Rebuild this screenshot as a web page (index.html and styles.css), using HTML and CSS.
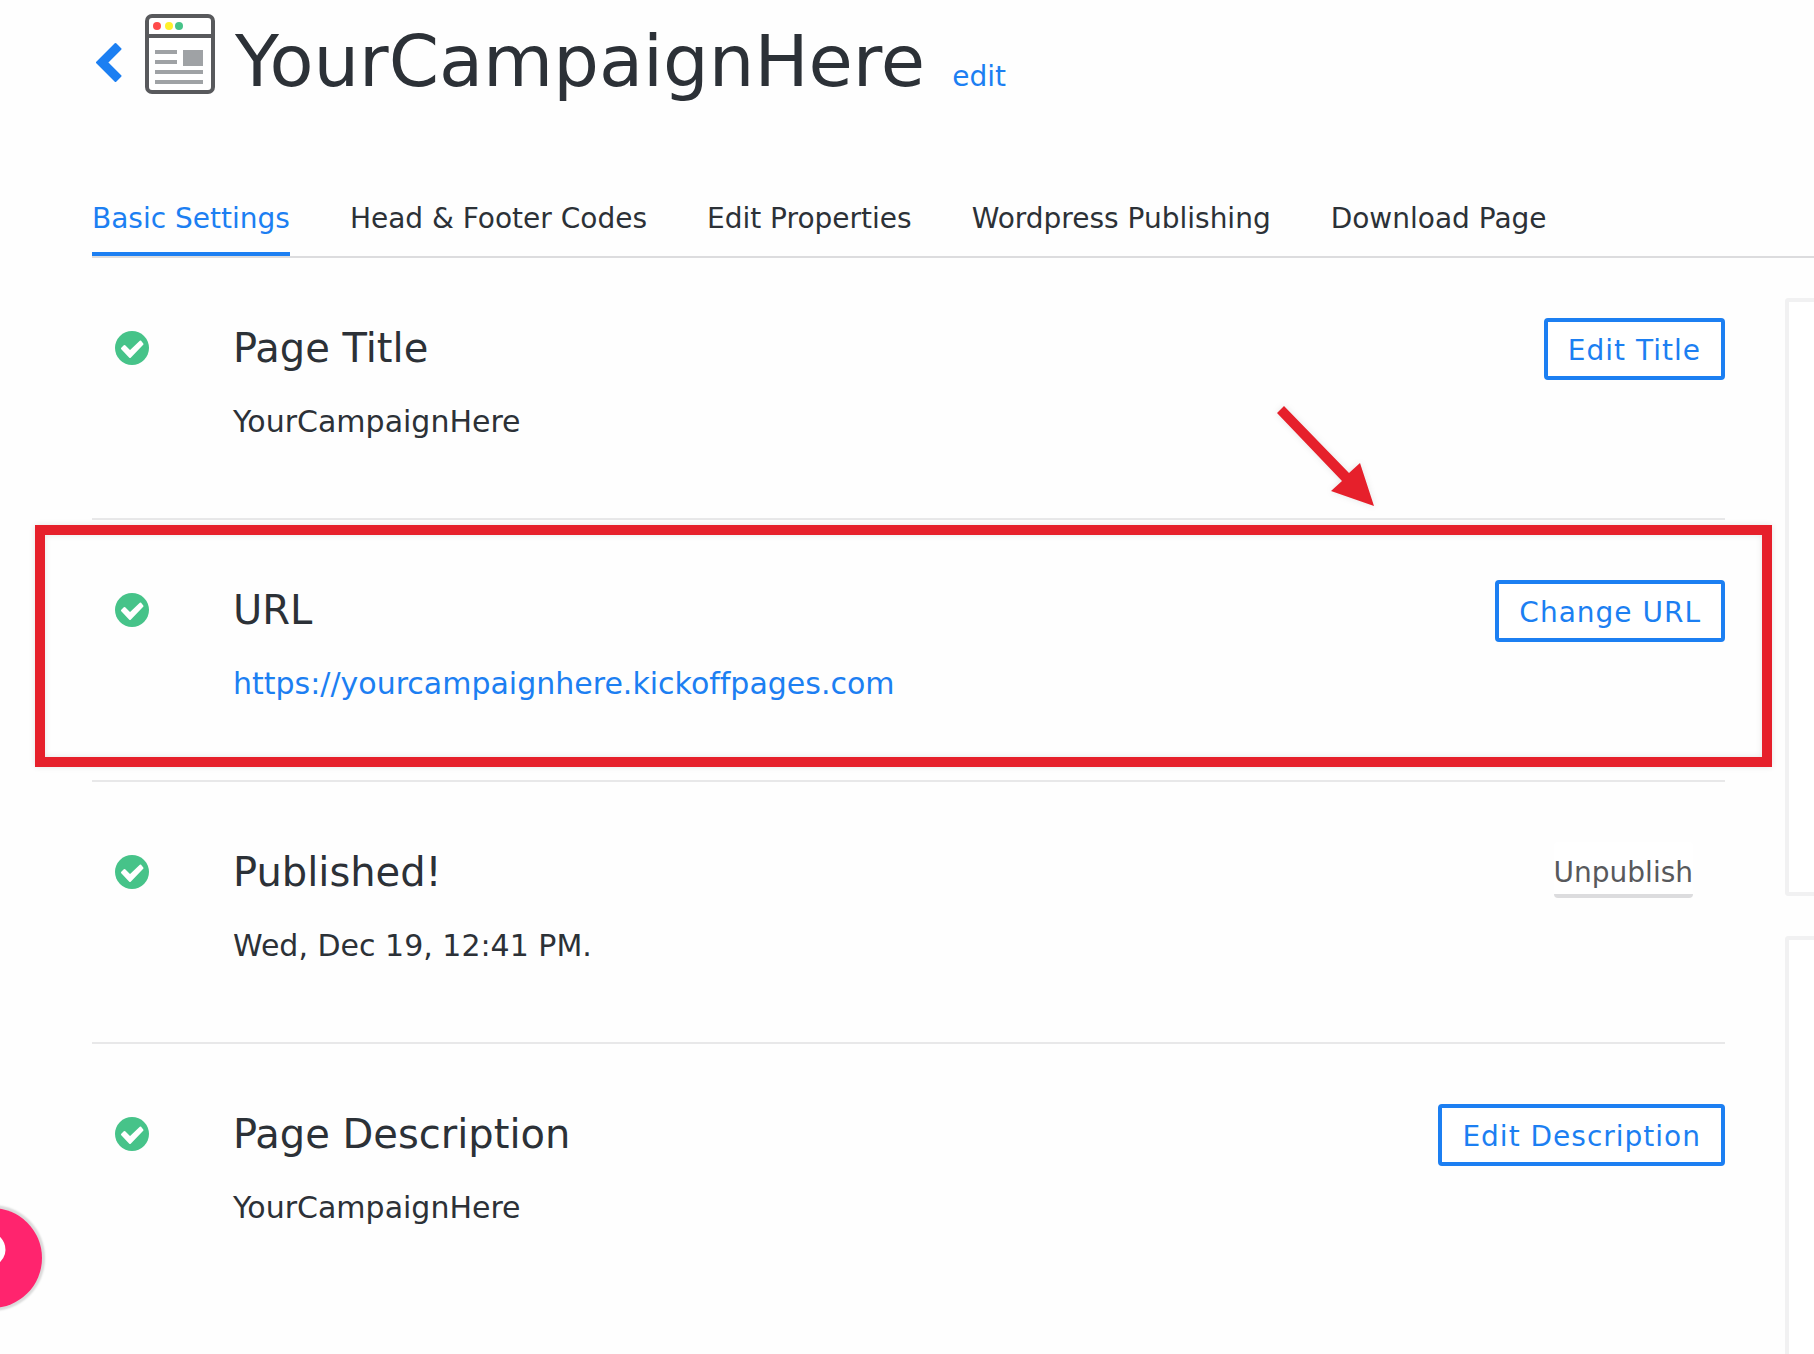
FILE: index.html
```html
<!DOCTYPE html>
<html lang="en">
<head>
    <meta charset="UTF-8">
    <title>YourCampaignHere - Basic Settings</title>
    <link rel="stylesheet" href="styles.css">
</head>
<body>
<svg class="sprite" aria-hidden="true">
    <symbol id="check" viewBox="0 0 34 34">
        <circle cx="17" cy="17" r="17" fill="#46c389"/>
        <path d="M7 17.500L9.500 15 15 20.500 25.500 10.500 27.500 13 15 26z" fill="#fff" stroke="#fff" stroke-width="2" stroke-linejoin="round"/>
    </symbol>
</svg>

<header class="page-header">
    <a class="back" href="#" aria-label="Back">
        <svg width="26" height="42" viewBox="0 0 26 42"><path d="M1 20.500L19.500 2l5 5L11 20.500 24.500 34l-5 5z" fill="#1c7ff2" stroke="#1c7ff2" stroke-width="2" stroke-linejoin="round"/></svg>
    </a>
    <svg class="page-icon" width="70" height="80" viewBox="0 0 70 80">
        <rect x="2" y="2" width="66" height="76" rx="5" fill="#fff" stroke="#58595c" stroke-width="4"/>
        <path d="M2 22h66" stroke="#58595c" stroke-width="4"/>
        <circle cx="12" cy="12" r="4" fill="#ff4b4b"/>
        <circle cx="24" cy="12" r="4" fill="#fff02a"/>
        <circle cx="34" cy="12" r="4" fill="#46c389"/>
        <path d="M10 38h22M10 48h22M10 58h48M10 68h48" stroke="#9fa2a5" stroke-width="4"/>
        <rect x="38" y="36" width="20" height="16" fill="#9fa2a5"/>
    </svg>
    <div class="title">
        <h1>YourCampaignHere</h1>
        <a href="#">edit</a>
    </div>
</header>

<nav class="tabs">
    <a class="active" href="#">Basic Settings</a>
    <a href="#">Head &amp; Footer Codes</a>
    <a href="#">Edit Properties</a>
    <a href="#">Wordpress Publishing</a>
    <a href="#">Download Page</a>
</nav>

<div class="layout">
    <main class="settings">
        <section class="row">
            <svg class="check"><use href="#check"/></svg>
            <div class="info">
                <h2>Page Title</h2>
                <p>YourCampaignHere</p>
            </div>
            <button class="btn">Edit Title</button>
        </section>

        <section class="row">
            <svg class="check"><use href="#check"/></svg>
            <div class="info">
                <h2>URL</h2>
                <p><a href="https://yourcampaignhere.kickoffpages.com">https://yourcampaignhere.kickoffpages.com</a></p>
            </div>
            <button class="btn">Change URL</button>
            <!-- callout -->
            <div class="highlight"></div>
            <svg class="arrow" width="98" height="102" viewBox="0 0 98 102">
                <path d="M0 8L7 1 72 68 83 58 97 101 54 86 65 76z" fill="#e6202b"/>
            </svg>
        </section>

        <section class="row">
            <svg class="check"><use href="#check"/></svg>
            <div class="info">
                <h2>Published!</h2>
                <p>Wed, Dec 19, 12:41 PM.</p>
            </div>
            <button class="btn-plain">Unpublish</button>
        </section>

        <section class="row">
            <svg class="check"><use href="#check"/></svg>
            <div class="info">
                <h2>Page Description</h2>
                <p>YourCampaignHere</p>
            </div>
            <button class="btn">Edit Description</button>
        </section>
    </main>

    <aside class="sidebar">
        <div class="card"></div>
        <div class="card"></div>
    </aside>
</div>

<button class="help" aria-label="Help">
    <svg width="100" height="100" viewBox="0 0 100 100">
        <path d="M34 36c6-6 20-4 20 6 0 8-12 8-12 18" fill="none" stroke="#fff" stroke-width="19"/>
        <circle cx="42" cy="80" r="8" fill="#fff"/>
    </svg>
</button>
</body>
</html>
```

FILE: styles.css
```css
* { box-sizing: border-box; }

body {
    display: flex;
    flex-direction: column;
    margin: 0;
    min-height: 100vh;
    background: #fefefe;
    color: #2c3137;
    font-family: Verdana, "DejaVu Sans", sans-serif;
    font-size: 28px;
    line-height: 32px;
    font-variant-ligatures: none;
}

h1, h2, p { margin: 0; font-weight: normal; }

a { color: #1c7ff2; text-decoration: none; }

button {
    font: inherit;
    cursor: pointer;
}

.sprite { display: none; }

.page-header {
    display: flex;
    align-items: flex-start;
    padding: 14px 0 0 96px;
}

.back {
    margin: 28px 23px 0 0;
}

.back svg, .page-icon { display: block; }

.title {
    display: flex;
    align-items: baseline;
    gap: 27px;
    margin-left: 20px;
}

.title h1 {
    font-size: 72px;
    line-height: 94px;
}

.tabs {
    display: flex;
    gap: 60px;
    margin: 95px 0 0 92px;
    border-bottom: 2px solid #dcdcde;
}

.tabs a {
    padding-bottom: 17px;
    border-bottom: 4px solid transparent;
    color: #2c3137;
    white-space: nowrap;
}

.tabs a.active {
    color: #1c7ff2;
    border-color: #1c7ff2;
}

.layout {
    display: flex;
    flex: 1;
    gap: 60px;
    margin-left: 92px;
}

.settings { flex: 1; }

.row {
    position: relative;
    display: grid;
    grid-template-columns: 118px 1fr auto;
    align-items: start;
    padding: 60px 0 76px 23px;
    border-bottom: 2px solid #e8e8e9;
}

.row:last-child {
    padding-bottom: 40px;
    border-bottom: none;
}

.check {
    width: 34px;
    height: 34px;
    margin-top: 13px;
}

.info { padding-top: 6px; }

.info h2 {
    font-size: 40px;
    line-height: 48px;
    margin-bottom: 30px;
}

.info p {
    font-size: 30px;
    line-height: 40px;
}

.btn {
    padding: 13px 20px 9px;
    border: 4px solid #1c7ff2;
    border-radius: 4px;
    background: #fff;
    color: #1c7ff2;
    letter-spacing: 1px;
}

.btn-plain {
    margin-right: 32px;
    padding: 15px 0 5px;
    border: none;
    border-bottom: 4px solid #dcdcde;
    border-radius: 4px;
    background: #fff;
    color: #58595c;
}

.highlight {
    position: absolute;
    top: 5px;
    bottom: 13px;
    left: -57px;
    right: -47px;
    border: 10px solid #e6202b;
    box-shadow: 0 0 6px rgba(0, 0, 0, 0.1), inset 0 0 6px rgba(0, 0, 0, 0.1);
    pointer-events: none;
}

.arrow {
    position: absolute;
    top: -115px;
    right: 350px;
    filter: drop-shadow(0 0 3px rgba(0, 0, 0, 0.1));
}

.sidebar {
    display: flex;
    flex-direction: column;
    gap: 40px;
    width: 29px;
    padding-top: 40px;
}

.card {
    height: 598px;
    border: 4px solid #f1f1f2;
    border-right: none;
    border-radius: 4px 0 0 4px;
    background: #fff;
}

.card:last-child {
    flex: 1;
    height: auto;
    border-bottom: none;
    border-radius: 4px 0 0 0;
}

.help {
    position: fixed;
    left: -58px;
    bottom: 46px;
    width: 100px;
    height: 100px;
    padding: 0;
    border: none;
    border-radius: 50%;
    background: #ff246e;
    box-shadow: 0 0 2px 3px rgba(0, 0, 0, 0.14);
}
```
